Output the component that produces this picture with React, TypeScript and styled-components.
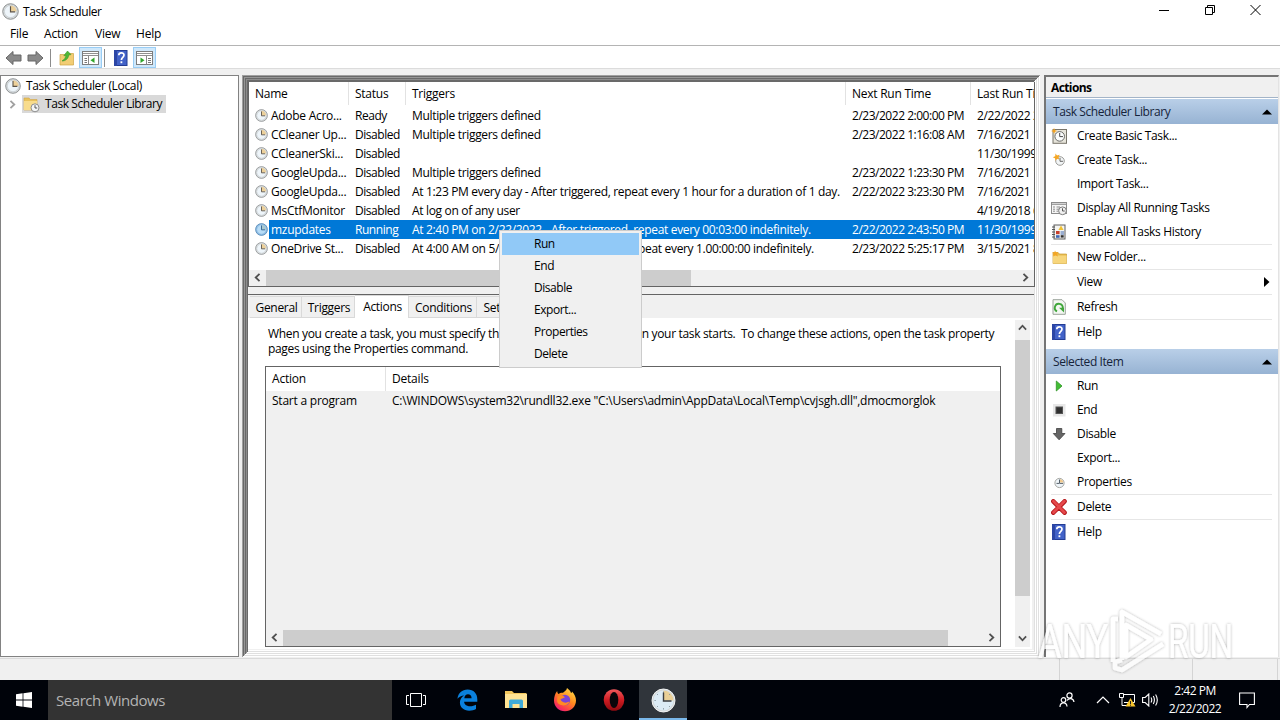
import React from "react";
import styled, { createGlobalStyle, css } from "styled-components";

const Global = createGlobalStyle`
  * { box-sizing: border-box; }
  html, body { margin: 0; padding: 0; overflow: hidden; }
  body {
    font-family: "Open Sans", "Noto Sans", sans-serif;
    font-size: 12px;
    line-height: 16px;
    letter-spacing: -0.33px;
    color: #000;
    white-space: nowrap;
    cursor: default;
  }
  svg { display: block; flex: none; }
`;

/* ---------- window chrome ---------- */
const Desktop = styled.div`
  width: 1280px;
  height: 720px;
  display: flex;
  flex-direction: column;
  background: #f0f0f0;
  position: relative;
  overflow: hidden;
`;
const TitleBar = styled.header`
  height: 23px;
  background: #fff;
  display: flex;
  align-items: center;
  padding-left: 2px;
  gap: 4px;
`;
const WindowTitle = styled.span`
  letter-spacing: -0.4px;
  padding-top: 1px;
`;
const WindowButtons = styled.div`
  margin: 0 2px 0 auto;
  align-self: flex-start;
  display: flex;
  width: 137px;
  height: 20px;
`;
const WindowButton = styled.div`
  flex: 1;
  display: flex;
  align-items: center;
  justify-content: center;
`;
const MenuBar = styled.nav`
  height: 22px;
  background: #fff;
  display: flex;
  align-items: center;
  padding-left: 10px;
  letter-spacing: -0.2px;
`;
const MenuEntry = styled.span<{ $w: number }>`
  width: ${(p) => p.$w}px;
`;
const Toolbar = styled.div`
  height: 24px;
  background: #fff;
  border-top: 1px solid #b4b4b4;
  border-bottom: 1px solid #dcdcdc;
  display: flex;
  align-items: flex-end;
  padding-left: 4px;
`;
const ToolButton = styled.div<{ $on?: boolean; $w?: number }>`
  width: ${(p) => p.$w ?? 23}px;
  height: 21px;
  display: flex;
  align-items: center;
  justify-content: center;
  ${(p) =>
    p.$on &&
    css`
      background: #cfe8fb;
      border: 1px solid #99cdf5;
    `}
`;
const ToolDivider = styled.div<{ $before: number }>`
  width: 1px;
  height: 18px;
  background: #8c8c8c;
  margin: 0 3px 1px ${(p) => p.$before}px;
`;
const Body = styled.main`
  height: 583px;
  margin-top: 6px;
  display: flex;
`;
const StatusBar = styled.footer`
  height: 22px;
  border-top: 1px solid #dadada;
  display: flex;
  justify-content: flex-end;
`;
const StatusCell = styled.div<{ $w: number }>`
  width: ${(p) => p.$w}px;
  border-left: 1px solid #d4d4d4;
`;

/* ---------- tree ---------- */
const TreePane = styled.aside`
  width: 239px;
  height: 582px;
  background: #fff;
  border: 1px solid #828282;
  padding-top: 1px;
`;
const TreeRow = styled.div<{ $indent: number }>`
  display: flex;
  align-items: center;
  height: 18px;
  padding-left: ${(p) => p.$indent}px;
  gap: 5px;
`;
const TreeSelected = styled.div`
  display: flex;
  align-items: center;
  gap: 5px;
  height: 18px;
  background: #d9d9d9;
  padding: 0 4px 0 1px;
  letter-spacing: -0.43px;
`;

/* ---------- centre ---------- */
const CentrePane = styled.section`
  width: 798px;
  margin-left: 3px;
  height: 582px;
  padding: 7px 5px 8px 6px;
  display: flex;
  flex-direction: column;
  background: #f0f0f0;
  box-shadow:
    inset 1px 1px 0 #a0a0a0,
    inset -1px -1px 0 #fff,
    inset 2px 2px 0 #696969,
    inset -2px -2px 0 #e0e0e0,
    inset 3px 3px 0 #969696,
    inset -3px -3px 0 #fff,
    inset 4px 4px 0 #696969,
    inset -4px -4px 0 #e0e0e0,
    inset 5px 5px 0 #8c8c8c,
    inset -5px -5px 0 #fff,
    inset 6px 6px 0 #696969,
    inset -6px -6px 0 #e0e0e0,
    inset 6px 7px 0 #696969,
    inset -6px -7px 0 #fff;
`;
const TaskList = styled.div`
  height: 205px;
  width: 787px;
  background: #fff;
  border-right: 1px solid #646464;
  border-bottom: 1px solid #646464;
  border-left: 1px solid #646464;
  overflow: hidden;
  display: flex;
  flex-direction: column;
`;
const ListHeader = styled.div`
  display: flex;
  height: 24px;
`;
const HeaderCell = styled.div<{ $w: number }>`
  flex: none;
  width: ${(p) => p.$w}px;
  padding: 4px 0 0 6px;
  height: 23px;
  border-right: 1px solid #e2e2e2;
  letter-spacing: -0.25px;
`;
const ListRow = styled.div<{ $sel?: boolean }>`
  height: 19px;
  display: flex;
  align-items: center;
  color: ${(p) => (p.$sel ? "#fff" : "#000")};
  background: ${(p) =>
    p.$sel ? "linear-gradient(90deg, #fff 20px, #0078d7 20px)" : "transparent"};
`;
const ListCell = styled.div<{ $w: number; $track: number }>`
  flex: none;
  width: ${(p) => p.$w}px;
  padding-left: 6px;
  letter-spacing: ${(p) => p.$track}px;
  display: flex;
  align-items: center;
  gap: 3px;
`;
const HScroll = styled.div`
  margin-top: auto;
  height: 16px;
  background: #f0f0f0;
  display: flex;
`;
const VScroll = styled.div`
  width: 15px;
  background: #f0f0f0;
  display: flex;
  flex-direction: column;
  height: 327px;
`;
const ArrowBox = styled.div<{ $w?: number }>`
  width: ${(p) => p.$w ?? 17}px;
  height: 16px;
  display: flex;
  align-items: center;
  justify-content: center;
  flex: none;
`;
const ThumbX = styled.div<{ $w: number }>`
  width: ${(p) => p.$w}px;
  background: #cdcdcd;
  margin-right: auto;
`;
const ThumbY = styled.div<{ $h: number }>`
  height: ${(p) => p.$h}px;
  background: #cdcdcd;
  margin: 4px 0 auto;
  width: 15px;
`;
const Details = styled.div`
  margin-top: 7px;
  border-top: 1px solid #646464;
  height: 356px;
  width: 786px;
  display: flex;
  flex-direction: column;
`;
const TabStrip = styled.div`
  height: 23px;
  display: flex;
  align-items: flex-end;
  padding-left: 2px;
`;
const Tab = styled.div<{ $w: number; $on?: boolean }>`
  width: ${(p) => p.$w}px;
  height: ${(p) => (p.$on ? 23 : 22)}px;
  padding: 3px 0 0 2px;
  background: ${(p) => (p.$on ? "#fff" : "#f0f0f0")};
  border: solid #d9d9d9;
  border-width: 1px 1px ${(p) => (p.$on ? 0 : 1)}px 0;
  text-align: center;
`;
const TabPage = styled.div`
  flex: 1;
  background: #fff;
  border-top: 1px solid #fff;
  margin-right: 2px;
  display: flex;
  justify-content: space-between;
  padding: 1px 2px 0 17px;
`;
const PageColumn = styled.div`
  display: flex;
  flex-direction: column;
`;
const Intro = styled.p`
  margin: 6px 0 9px 3px;
  line-height: 15px;
  white-space: pre;
  height: 31px;
`;
const ActionTable = styled.div`
  width: 736px;
  height: 281px;
  background: #f0f0f0;
  border: 1px solid #646464;
  display: flex;
  flex-direction: column;
`;
const ActionHeader = styled.div`
  display: flex;
  background: #fff;
  height: 24px;
  letter-spacing: -0.2px;
`;
const ActionCell = styled.div<{ $w: number; $line?: boolean }>`
  width: ${(p) => p.$w}px;
  padding: 4px 0 0 6px;
  ${(p) => p.$line && "border-right: 1px solid #e2e2e2;"}
`;
const ActionRow = styled.div`
  display: flex;
  height: 20px;
  margin-top: -2px;
  letter-spacing: -0.23px;
`;

/* ---------- actions pane ---------- */
const ActionsPane = styled.aside`
  margin-left: 4px;
  width: 235px;
  height: 582px;
  background: #fff;
  border-left: 2px solid #757575;
  border-top: 2px solid #757575;
  border-right: 1px solid #e3e3e3;
`;
const PaneTitle = styled.div`
  height: 21px;
  background: #f0f0f0;
  border-bottom: 1px solid #a3b4c8;
  padding: 3px 0 0 5px;
  font-weight: 700;
  letter-spacing: -0.6px;
`;
const Section = styled.div<{ $first?: boolean }>`
  height: 25px;
  margin-top: ${(p) => (p.$first ? 1 : 5)}px;
  background: linear-gradient(#b9cfe8, #97b3d3);
  display: flex;
  align-items: center;
  justify-content: space-between;
  padding: 0 6px 0 7px;
  color: #15233a;
  letter-spacing: -0.42px;
`;
const ActionItem = styled.div<{ $ruled?: boolean }>`
  height: ${(p) => (p.$ruled ? 25 : 24)}px;
  display: flex;
  align-items: center;
  margin: 0 6px 0 5px;
  border-bottom: ${(p) => (p.$ruled ? "1px solid #e6e6e6" : "0")};
`;
const IconSlot = styled.span`
  width: 16px;
  height: 16px;
  margin-right: 10px;
  flex: none;
`;
const Submenu = styled.svg`
  margin: 0 2px 0 auto;
`;

/* ---------- popup ---------- */
const ContextMenu = styled.div`
  position: absolute;
  left: 499px;
  top: 230px;
  width: 143px;
  height: 138px;
  background: #f0f0f0;
  border: 1px solid #ccc;
  padding: 2px;
  letter-spacing: -0.45px;
`;
const ContextItem = styled.div<{ $hot?: boolean }>`
  height: 22px;
  padding: 3px 0 0 32px;
  background: ${(p) => (p.$hot ? "#91c9f7" : "transparent")};
`;
const Watermark = styled.svg`
  position: absolute;
  left: 1030px;
  top: 600px;
`;

/* ---------- taskbar ---------- */
const Taskbar = styled.div`
  height: 40px;
  background: #00030a;
  display: flex;
  color: #fff;
`;
const TaskButton = styled.div<{ $w?: number; $on?: boolean }>`
  width: ${(p) => p.$w ?? 49}px;
  height: 40px;
  display: flex;
  align-items: center;
  justify-content: center;
  ${(p) =>
    p.$on &&
    css`
      background: #30353b;
      border-bottom: 2px solid #7ab8ea;
      padding-top: 2px;
    `}
`;
const SearchBox = styled.div`
  width: 344px;
  background: #333;
  color: #b4b4b4;
  font-size: 15px;
  letter-spacing: -0.45px;
  line-height: 40px;
  padding-left: 8px;
`;
const Tray = styled.div`
  margin-left: auto;
  display: flex;
  align-items: center;
`;
const TrayItem = styled.div<{ $w: number }>`
  width: ${(p) => p.$w}px;
  display: flex;
  justify-content: center;
`;
const Clock = styled.div`
  width: 52px;
  display: flex;
  flex-direction: column;
  align-items: center;
  line-height: 18px;
  letter-spacing: -0.5px;
`;

/* ---------- icons ---------- */
const ClockIcon = ({ size = 16, tint = false }: { size?: number; tint?: boolean }) => (
  <svg width={size} height={size} viewBox="0 0 16 16">
    <circle cx="8" cy="8" r="7.3" fill={tint ? "#8dbce4" : "#d9dcdd"} stroke={tint ? "#4a7fae" : "#868a8c"} strokeWidth=".9" />
    <circle cx="8" cy="8" r="5.7" fill={tint ? "#b8dcf6" : "#eef5fa"} stroke={tint ? "#7fb0da" : "#b9c0c5"} strokeWidth=".5" />
    <path d="M8 8V2.3A5.7 5.7 0 0 1 13.7 8Z" fill={tint ? "#a9c8cf" : "#ecd09a"} />
    <path d="M8 3V8.4H12.4" fill="none" stroke={tint ? "#2d5f8c" : "#5c5348"} strokeWidth="1.1" />
  </svg>
);
const LargeClockIcon = () => (
  <svg width="25" height="25" viewBox="0 0 25 25">
    <circle cx="12.5" cy="12.5" r="11.5" fill="#d3d8da" stroke="#f1f3f3" />
    <circle cx="12.5" cy="12.5" r="10" fill="#dcebf5" />
    <path d="M12.5 12.5V2.5A10 10 0 0 1 22.5 12.5Z" fill="#e9cf96" />
    <path d="M12.5 3.5V4.8M12.5 20.200V21.500M3.500 12.500H4.800M6.100 6.100 7 7M6.100 18.900 7 18M18.900 18.900 18 18M18.900 6.100 18 7" stroke="#8b98a0" />
    <path d="M12.500 4.500V13H20.500" fill="none" stroke="#3b3d3f" strokeWidth="1.400" />
  </svg>
);
const MiniClock = () => (
  <svg width="16" height="16" viewBox="0 0 16 16">
    <circle cx="8.5" cy="9" r="4.6" fill="#eef4f8" stroke="#a5a6a2" />
    <path d="M9 5.2A4 4 0 0 1 12.4 8.6H9Z" fill="#f2c98b" />
    <path d="M8.5 5.5V9.4H12M5.5 9.4H8" fill="none" stroke="#55606a" />
  </svg>
);
const BackArrow = ({ flip = false }: { flip?: boolean }) => (
  <svg width="17" height="16" viewBox="0 0 17 16">
    <path
      transform={flip ? "translate(17 0) scale(-1 1)" : undefined}
      d="M1 8 8 1.5V5H16V11H8V14.5Z"
      fill="#8a8a8a"
      stroke="#666"
    />
  </svg>
);
const FolderShape = () => (
  <>
    <path d="M1 3.5H6L7.5 5H14.5V14.5H1Z" fill="#e8bc4e" stroke="#c99b36" strokeWidth=".7" />
    <path d="M1 6.5H14.5V14.5H1Z" fill="#f7d67c" />
  </>
);
const UpFolder = () => (
  <svg width="16" height="16" viewBox="0 0 16 16">
    <path d="M1 4.5H6L7.5 3.5H14.5V15H1Z" fill="#f2cd74" stroke="#cfa344" strokeWidth=".7" />
    <path d="M3 11C5.5 9.5 6.5 7.5 7 5.5L4.8 5.8 8.5 1 12 4.6 9.8 5C9.3 8.5 7 11 3 11Z" fill="#4fb836" stroke="#2f8c22" strokeWidth=".5" />
  </svg>
);
const PanelIcon = ({ right = false }: { right?: boolean }) => (
  <svg width="17" height="16" viewBox="0 0 17 16">
    <rect x=".5" y="1.5" width="16" height="13" fill="#fff" stroke="#7d7d7d" />
    <path d="M1 3.5H16M1 5.5H16" stroke="#909090" />
    {right ? (
      <>
        <path d="M10.5 6V14.5" stroke="#8a8a8a" />
        <path d="M12 8.5H15M12 10.5H15M12 12.5H15" stroke="#777" />
        <path d="M4.5 7.5 8.5 10.2 4.5 13Z" fill="#31a62b" />
      </>
    ) : (
      <>
        <path d="M6.5 6V14.5" stroke="#8a8a8a" />
        <path d="M2.5 8.5H5M2.5 10.5H5M2.5 12.5H5" stroke="#777" />
        <path d="M12.5 7.5 8.5 10.2 12.5 13Z" fill="#31a62b" />
      </>
    )}
  </svg>
);
const HelpIcon = () => (
  <svg width="16" height="16" viewBox="0 0 16 16">
    <rect x="1.5" y=".5" width="12.5" height="15" fill="#4262c8" stroke="#233c93" />
    <rect x="1" y="0" width="3" height="16" fill="#2c46a5" />
    <path d="M5.8 5.2C5.8 2 11 2 11 5.1 11 7.4 8.4 7.2 8.4 10" fill="none" stroke="#fff" strokeWidth="1.7" />
    <rect x="7.5" y="11.3" width="1.8" height="1.9" fill="#fff" />
  </svg>
);
const TreeFolder = () => (
  <svg width="17" height="17" viewBox="0 0 17 17">
    <path d="M1 2H6L7.3 3.5H14V14H1Z" fill="#e9c25c" stroke="#d1a548" strokeWidth=".6" />
    <path d="M1 5H14V14H1Z" fill="#f8dc8c" />
    <circle cx="12" cy="11.8" r="4" fill="#f4f6f7" stroke="#8d8d8d" />
    <path d="M12 9.2V12H14.2" fill="none" stroke="#555" />
  </svg>
);
const BasicTask = () => (
  <svg width="16" height="16" viewBox="0 0 16 16">
    <rect x="2" y="1.5" width="13.5" height="13.8" fill="#e6e4da" stroke="#77746a" />
    <circle cx="8.7" cy="8.4" r="4.8" fill="#fbfdfd" stroke="#6b6b68" />
    <path d="M8.7 5V8.6H12" fill="none" stroke="#4a4a4a" />
    <path d="M3 0 4 2.3 6.3 3 4 3.8 3 6 2.2 3.8 0 3 2.2 2.3Z" fill="#f5a21b" />
  </svg>
);
const NewTask = () => (
  <svg width="16" height="16" viewBox="0 0 16 16">
    <circle cx="9" cy="9" r="4.3" fill="#f2f5f6" stroke="#9b9b98" />
    <path d="M9 6V9.3H12" fill="none" stroke="#666" />
    <path d="M4.5 1.5 6 3.5 8.7 2.8 7.5 5.2 8.3 7.5 6 6.8 4.5 8.8 4 6.3 1.8 5.3 4.2 4.2Z" fill="#f5a623" />
  </svg>
);
const RunningTasks = () => (
  <svg width="16" height="16" viewBox="0 0 16 16">
    <rect x=".5" y="2.5" width="15" height="11" fill="#f6f6f6" stroke="#8c8c8c" />
    <path d="M1 4.3H15" stroke="#a0a0a0" strokeWidth="1.4" />
    <path d="M2 7H4M5.5 7H9M2 9.2H4M5.5 9.2H8M2 11.2H4M5.5 11.2H7" stroke="#8b8b8b" />
    <circle cx="11.5" cy="10.8" r="3.9" fill="#f0f0f0" stroke="#7b7b7b" />
    <path d="M11.5 8.3V11H13.7" fill="none" stroke="#555" />
  </svg>
);
const HistoryIcon = () => (
  <svg width="16" height="16" viewBox="0 0 16 16">
    <rect x="3" y="1" width="11" height="14" fill="#f5f5f2" stroke="#5e5e5e" />
    <path d="M1 3H4M1 5.5H4M1 8H4M1 10.5H4M1 13H4" stroke="#555" />
    <path d="M10 1.5 12.6 6H7.4Z" fill="#f1c232" />
    <rect x="5" y="7" width="3.6" height="3.2" fill="#c8402c" />
    <path d="M9.5 8H13M9.5 10H13" stroke="#4068b0" />
    <rect x="5" y="11.2" width="3.6" height="2.6" fill="#3e66b5" />
    <rect x="9.7" y="11.2" width="3" height="2.4" fill="#303030" />
  </svg>
);
const NewFolder = () => (
  <svg width="16" height="16" viewBox="0 0 16 16">
    <g transform="translate(1 0)">
      <FolderShape />
    </g>
    <path d="M4 1.5 5 3.6 7.5 3.2 6 5 7 7.5 4.5 6.2 2 7.5 2.8 5 1 3.6 3.4 3.6Z" fill="#f5a623" />
  </svg>
);
const RefreshIcon = () => (
  <svg width="16" height="16" viewBox="0 0 16 16">
    <path d="M2 .7H11L14.3 4V15.3H2Z" fill="#f3f7f2" stroke="#9aa39a" />
    <path d="M6 12.4A4 4 0 1 1 11.8 9" fill="none" stroke="#3fa63a" strokeWidth="1.9" />
    <path d="M8 8.8H13V13.5Z" fill="#3fa63a" />
  </svg>
);
const RunIcon = () => (
  <svg width="16" height="16" viewBox="0 0 16 16">
    <path d="M5.3 3 11 8 5.3 13Z" fill="#42bd35" stroke="#2d9425" strokeWidth=".8" />
  </svg>
);
const EndIcon = () => (
  <svg width="16" height="16" viewBox="0 0 16 16">
    <rect x="2" y="2" width="12.5" height="12.5" fill="#e8e8e8" />
    <rect x="5" y="5" width="6.5" height="6.5" fill="#303030" stroke="#555" />
  </svg>
);
const DownIcon = () => (
  <svg width="16" height="16" viewBox="0 0 16 16">
    <path d="M5.5 2.5H10.8V7.5H14L8.1 13.8 2.3 7.5H5.5Z" fill="#666" stroke="#404040" strokeWidth=".8" />
  </svg>
);
const DeleteIcon = () => (
  <svg width="16" height="16" viewBox="0 0 16 16">
    <path d="M2.3 2.3 13.6 13.7M13.6 2.3 2.3 13.7" stroke="#b4181b" strokeWidth="4.5" strokeLinecap="round" />
    <path d="M2.5 2.2 13.4 13.4M13.4 2.2 2.5 13.4" stroke="#e6484b" strokeWidth="2.8" strokeLinecap="round" />
  </svg>
);
const Triangle = () => (
  <svg width="10" height="6" viewBox="0 0 10 6">
    <path d="M0 5.5 5 .5 10 5.5Z" fill="#000" />
  </svg>
);
const Chevron = ({ dir, color = "#505050" }: { dir: number; color?: string }) => (
  <svg width="9" height="9" viewBox="0 0 8 8">
    <path transform={`rotate(${dir} 4 4)`} d="M2.2 .8 5.6 4 2.2 7.2" fill="none" stroke={color} strokeWidth="1.6" />
  </svg>
);

const tasks: string[][] = [
  ["Adobe Acro...", "Ready", "Multiple triggers defined", "2/23/2022 2:00:00 PM", "2/22/2022 2:00:00 PM"],
  ["CCleaner Up...", "Disabled", "Multiple triggers defined", "2/23/2022 1:16:08 AM", "7/16/2021 1:16:08 AM"],
  ["CCleanerSki...", "Disabled", "", "", "11/30/1999 12:00:00 AM"],
  ["GoogleUpda...", "Disabled", "Multiple triggers defined", "2/23/2022 1:23:30 PM", "7/16/2021 1:23:30 PM"],
  ["GoogleUpda...", "Disabled", "At 1:23 PM every day - After triggered, repeat every 1 hour for a duration of 1 day.", "2/22/2022 3:23:30 PM", "7/16/2021 1:23:30 PM"],
  ["MsCtfMonitor", "Disabled", "At log on of any user", "", "4/19/2018 6:14:00 AM"],
  ["mzupdates", "Running", "At 2:40 PM on 2/22/2022 - After triggered, repeat every 00:03:00 indefinitely.", "2/22/2022 2:43:50 PM", "11/30/1999 12:00:00 AM"],
  ["OneDrive St...", "Disabled", "At 4:00 AM on 5/1/1992 - After triggered, repeat every 1.00:00:00 indefinitely.", "2/23/2022 5:25:17 PM", "3/15/2021 8:25:17 PM"],
];
type Column = { name: string; width: number; track: number };
const columns: Column[] = [
  { name: "Name", width: 100, track: -0.28 },
  { name: "Status", width: 57, track: -0.45 },
  { name: "Triggers", width: 440, track: -0.33 },
  { name: "Next Run Time", width: 125, track: -0.48 },
  { name: "Last Run Time", width: 120, track: -0.4 },
];

type Item = { label: string; icon?: React.ReactNode; ruled?: boolean; more?: boolean };
const libraryItems: Item[] = [
  { label: "Create Basic Task...", icon: <BasicTask /> },
  { label: "Create Task...", icon: <NewTask /> },
  { label: "Import Task..." },
  { label: "Display All Running Tasks", icon: <RunningTasks /> },
  { label: "Enable All Tasks History", icon: <HistoryIcon />, ruled: true },
  { label: "New Folder...", icon: <NewFolder />, ruled: true },
  { label: "View", ruled: true, more: true },
  { label: "Refresh", icon: <RefreshIcon />, ruled: true },
  { label: "Help", icon: <HelpIcon /> },
];
const selectedItems: Item[] = [
  { label: "Run", icon: <RunIcon /> },
  { label: "End", icon: <EndIcon /> },
  { label: "Disable", icon: <DownIcon /> },
  { label: "Export..." },
  { label: "Properties", icon: <MiniClock />, ruled: true },
  { label: "Delete", icon: <DeleteIcon />, ruled: true },
  { label: "Help", icon: <HelpIcon /> },
];

const Items = ({ list }: { list: Item[] }) => (
  <>
    {list.map((it) => (
      <ActionItem key={it.label} $ruled={it.ruled}>
        <IconSlot>{it.icon}</IconSlot>
        {it.label}
        {it.more && (
          <Submenu width="6" height="10" viewBox="0 0 6 10">
            <path d="M0 0 5.5 5 0 10Z" />
          </Submenu>
        )}
      </ActionItem>
    ))}
  </>
);

export default function App() {
  return (
    <Desktop>
      <Global />
      <TitleBar>
        <ClockIcon size={17} />
        <WindowTitle>Task Scheduler</WindowTitle>
        <WindowButtons>
          <WindowButton>
            <svg width="10" height="10" viewBox="0 0 10 10"><path d="M0 5.5H10" stroke="#000" /></svg>
          </WindowButton>
          <WindowButton>
            <svg width="10" height="10" viewBox="0 0 10 10"><path d="M.5 2.5H7.5V9.5H.5ZM2.5 2.5V.5H9.5V7.5H7.5" fill="none" stroke="#000" /></svg>
          </WindowButton>
          <WindowButton>
            <svg width="11" height="10" viewBox="0 0 11 10"><path d="M.5 0 10.5 10M10.5 0 .5 10" stroke="#000" /></svg>
          </WindowButton>
        </WindowButtons>
      </TitleBar>
      <MenuBar>
        <MenuEntry $w={34}>File</MenuEntry>
        <MenuEntry $w={51}>Action</MenuEntry>
        <MenuEntry $w={41}>View</MenuEntry>
        <MenuEntry $w={30}>Help</MenuEntry>
      </MenuBar>
      <Toolbar>
        <ToolButton $w={18}><BackArrow /></ToolButton>
        <ToolButton $w={26}><BackArrow flip /></ToolButton>
        <ToolDivider $before={2} />
        <ToolButton $w={25}><UpFolder /></ToolButton>
        <ToolButton $on><PanelIcon /></ToolButton>
        <ToolDivider $before={2} />
        <ToolButton $w={25}><HelpIcon /></ToolButton>
        <ToolButton $on><PanelIcon right /></ToolButton>
      </Toolbar>

      <Body>
        <TreePane>
          <TreeRow $indent={4}>
            <ClockIcon size={16} />
            <span>Task Scheduler (Local)</span>
          </TreeRow>
          <TreeRow $indent={7}>
            <Chevron dir={0} color="#a0a0a0" />
            <TreeSelected>
              <TreeFolder />
              <span>Task Scheduler Library</span>
            </TreeSelected>
          </TreeRow>
        </TreePane>

        <CentrePane>
          <TaskList>
            <ListHeader>
              {columns.map((col) => (
                <HeaderCell key={col.name} $w={col.width}>{col.name}</HeaderCell>
              ))}
            </ListHeader>
            {tasks.map((row, i) => (
              <ListRow key={i} $sel={i === 6}>
                {row.map((text, c) => (
                  <ListCell key={c} $w={columns[c].width} $track={columns[c].track}>
                    {c === 0 && <ClockIcon size={13} tint={i === 6} />}
                    {text}
                  </ListCell>
                ))}
              </ListRow>
            ))}
            <HScroll>
              <ArrowBox><Chevron dir={180} /></ArrowBox>
              <ThumbX $w={425} />
              <ArrowBox><Chevron dir={0} /></ArrowBox>
            </HScroll>
          </TaskList>

          <Details>
            <TabStrip>
              <Tab $w={52}>General</Tab>
              <Tab $w={53}>Triggers</Tab>
              <Tab $w={54} $on>Actions</Tab>
              <Tab $w={68}>Conditions</Tab>
              <Tab $w={54}>Settings</Tab>
            </TabStrip>
            <TabPage>
              <PageColumn>
                <Intro>{"When you create a task, you must specify the action that will occur when your task starts.  To change these actions, open the task property\npages using the Properties command."}</Intro>
                <ActionTable>
                  <ActionHeader>
                    <ActionCell $w={120} $line>Action</ActionCell>
                    <ActionCell $w={600}>Details</ActionCell>
                  </ActionHeader>
                  <ActionRow>
                    <ActionCell $w={120}>Start a program</ActionCell>
                    <ActionCell $w={600}>{'C:\\WINDOWS\\system32\\rundll32.exe "C:\\Users\\admin\\AppData\\Local\\Temp\\cvjsgh.dll",dmocmorglok'}</ActionCell>
                  </ActionRow>
                  <HScroll>
                    <ArrowBox><Chevron dir={180} /></ArrowBox>
                    <ThumbX $w={665} />
                    <ArrowBox><Chevron dir={0} /></ArrowBox>
                  </HScroll>
                </ActionTable>
              </PageColumn>
              <VScroll>
                <ArrowBox $w={15}><Chevron dir={-90} /></ArrowBox>
                <ThumbY $h={256} />
                <ArrowBox $w={15}><Chevron dir={90} /></ArrowBox>
              </VScroll>
            </TabPage>
          </Details>
        </CentrePane>

        <ActionsPane>
          <PaneTitle>Actions</PaneTitle>
          <Section $first>Task Scheduler Library<Triangle /></Section>
          <Items list={libraryItems} />
          <Section>Selected Item<Triangle /></Section>
          <Items list={selectedItems} />
        </ActionsPane>
      </Body>

      <StatusBar>
        <StatusCell $w={133} />
        <StatusCell $w={85} />
        <StatusCell $w={3} />
      </StatusBar>

      <Taskbar>
        <TaskButton $w={48}>
          <svg width="16" height="16" viewBox="0 0 16 16" fill="#fff">
            <path d="M0 2.2 6.6 1.3V7.6H0ZM7.4 1.2 16 0V7.6H7.4ZM0 8.4H6.6V14.7L0 13.8ZM7.4 8.4H16V16L7.4 14.8Z" />
          </svg>
        </TaskButton>
        <SearchBox>Search Windows</SearchBox>
        <TaskButton $w={48}>
          <svg width="20" height="14" viewBox="0 0 20 14" fill="none" stroke="#fff">
            <path d="M4.5 .5H15.5V13.5H4.5ZM3 2.5H.5V11.5H3M17 2.5H19.5V11.5H17" />
          </svg>
        </TaskButton>
        <TaskButton $w={54}>
          <svg width="21" height="22" viewBox="0 0 21 22">
            <path d="M.4 9.7C1.3 4 5 .5 10.6.5 16.6.5 20.3 4.7 20.3 10.2V12.8H7.1C7.3 15.8 10 17.3 13.1 17.3 15.5 17.3 17.5 16.7 19 15.8V20.1C17.2 21.1 14.9 21.7 12.2 21.7 6.6 21.7 2.9 18.4 2.9 13.6 2.9 10.5 4.5 8 7.1 6.5 4.5 6.7 2.1 7.9.4 9.7ZM7.3 9.3H14.6C14.6 6.7 13.1 5.3 11 5.3 9 5.3 7.6 6.9 7.3 9.3Z" fill="#0a80dc" />
          </svg>
        </TaskButton>
        <TaskButton $w={44}>
          <svg width="22" height="20" viewBox="0 0 22 20">
            <path d="M0 1H7L9 3H21.5V18H0Z" fill="#f2c65c" />
            <path d="M0 4H22V18H0Z" fill="#ffe394" />
            <path d="M4 18V11Q4 9.5 5.5 9.5H16.5Q18 9.5 18 11V18H14.5V14H7.5V18Z" fill="#3faad8" />
          </svg>
        </TaskButton>
        <TaskButton $w={53}>
          <svg width="24" height="24" viewBox="0 0 24 24">
            <defs>
              <linearGradient id="fox" x1=".85" y1="0" x2=".2" y2="1">
                <stop offset="0" stopColor="#ffe14a" />
                <stop offset=".45" stopColor="#ff8a1e" />
                <stop offset=".8" stopColor="#fb3a4e" />
                <stop offset="1" stopColor="#e31587" />
              </linearGradient>
            </defs>
            <path d="M14 0C16 1.5 17.5 3 18 5 18.8 4.7 19 4 19 3.4 21.5 5.8 23 9 23 12.5 23 18.8 18 23.3 12 23.3 5.8 23.3 1 18.5 1 12.5 1 9 2 5.5 4.2 3 4.2 4.3 4.7 5.2 5.5 6 6.8 4.8 8.5 4.5 10 4.7 11.5 3.6 13.5 2.5 14 0Z" fill="url(#fox)" />
            <circle cx="12" cy="12" r="5.2" fill="#7a43d6" />
            <path d="M4.5 8.5C7 6.5 10 7 12 9.3 10.5 9.7 9.5 11 7.5 11 8 14 12 16 16.5 13.5 15 19 5 18.5 4 13Z" fill="#ff8a24" />
          </svg>
        </TaskButton>
        <TaskButton $w={45}>
          <svg width="22" height="22" viewBox="0 0 22 22">
            <defs>
              <linearGradient id="op" x1="0" y1="0" x2="0" y2="1">
                <stop offset="0" stopColor="#f05a5c" />
                <stop offset=".5" stopColor="#cf1c22" />
                <stop offset="1" stopColor="#8c0b10" />
              </linearGradient>
            </defs>
            <ellipse cx="11" cy="11" rx="10.3" ry="10.8" fill="url(#op)" />
            <ellipse cx="11" cy="11" rx="4.3" ry="8" fill="#08060a" />
          </svg>
        </TaskButton>
        <TaskButton $w={3} />
        <TaskButton $w={48} $on><LargeClockIcon /></TaskButton>
        <Tray>
          <TrayItem $w={32}>
            <svg width="16" height="16" viewBox="0 0 16 16" fill="none" stroke="#fff" strokeWidth="1.2">
              <circle cx="10.5" cy="3.5" r="2.6" />
              <circle cx="4.5" cy="8" r="2.3" />
              <path d="M1 15C1 9.5 8 9.5 8 14.5M8 8.5C10 5.5 14.5 6 15 10" />
            </svg>
          </TrayItem>
          <TrayItem $w={40}>
            <svg width="14" height="8" viewBox="0 0 14 8" fill="none" stroke="#fff" strokeWidth="1.2"><path d="M1 7 7 1 13 7" /></svg>
          </TrayItem>
          <TrayItem $w={8}>
            <svg width="17" height="16" viewBox="0 0 17 16">
              <path d="M4.5 2.5H15.5V10.5H5M3 6V13.5H10M.5 1.5H4.5V5.5H.5Z" fill="none" stroke="#fff" />
              <path d="M11.5 6 16.5 14.5H6.5Z" fill="#f7c52c" />
              <path d="M11.5 9V12M11.5 12.7V13.7" stroke="#222" />
            </svg>
          </TrayItem>
          <TrayItem $w={38}>
            <svg width="17" height="14" viewBox="0 0 17 14" fill="none" stroke="#fff" strokeWidth="1.1">
              <path d="M.6 4.5H3.2L6.8 1V13L3.2 9.5H.6ZM9 4.5Q10.5 7 9 9.5M11.3 3Q13.5 7 11.3 11M13.6 1.5Q17 7 13.6 12.5" />
            </svg>
          </TrayItem>
          <Clock>
            <span>2:42 PM</span>
            <span>2/22/2022</span>
          </Clock>
          <TrayItem $w={52}>
            <svg width="16" height="17" viewBox="0 0 16 17" fill="none" stroke="#fff" strokeWidth="1.1">
              <path d="M.6 1H15.4V12.5H10.5L8 15.5V12.5H.6Z" />
            </svg>
          </TrayItem>
          <TrayItem $w={7} />
        </Tray>
      </Taskbar>

      <ContextMenu>
        <ContextItem $hot>Run</ContextItem>
        <ContextItem>End</ContextItem>
        <ContextItem>Disable</ContextItem>
        <ContextItem>Export...</ContextItem>
        <ContextItem>Properties</ContextItem>
        <ContextItem>Delete</ContextItem>
      </ContextMenu>

      <Watermark width="212" height="80" viewBox="0 0 212 80">
        <defs>
          <filter id="glow" x="-10%" y="-20%" width="120%" height="140%">
            <feDropShadow dx="0" dy="0" stdDeviation="1.5" floodColor="#000" floodOpacity=".42" />
          </filter>
        </defs>
        <g filter="url(#glow)" fill="#fff" fontFamily="Roboto, sans-serif" fontSize="49" fontWeight="400" opacity=".75">
          <text x="8" y="58" textLength="70" lengthAdjust="spacingAndGlyphs">ANY</text>
          <text x="138" y="58" textLength="65" lengthAdjust="spacingAndGlyphs">RUN</text>
          <path
            d="M83 62V19H88M131 34 92 12V60M96 25V57L121 39.5ZM92 60 85 62V68L92 70 133 44"
            fill="none"
            stroke="#fff"
            strokeWidth="4.5"
            strokeLinejoin="round"
          />
        </g>
      </Watermark>
    </Desktop>
  );
}
